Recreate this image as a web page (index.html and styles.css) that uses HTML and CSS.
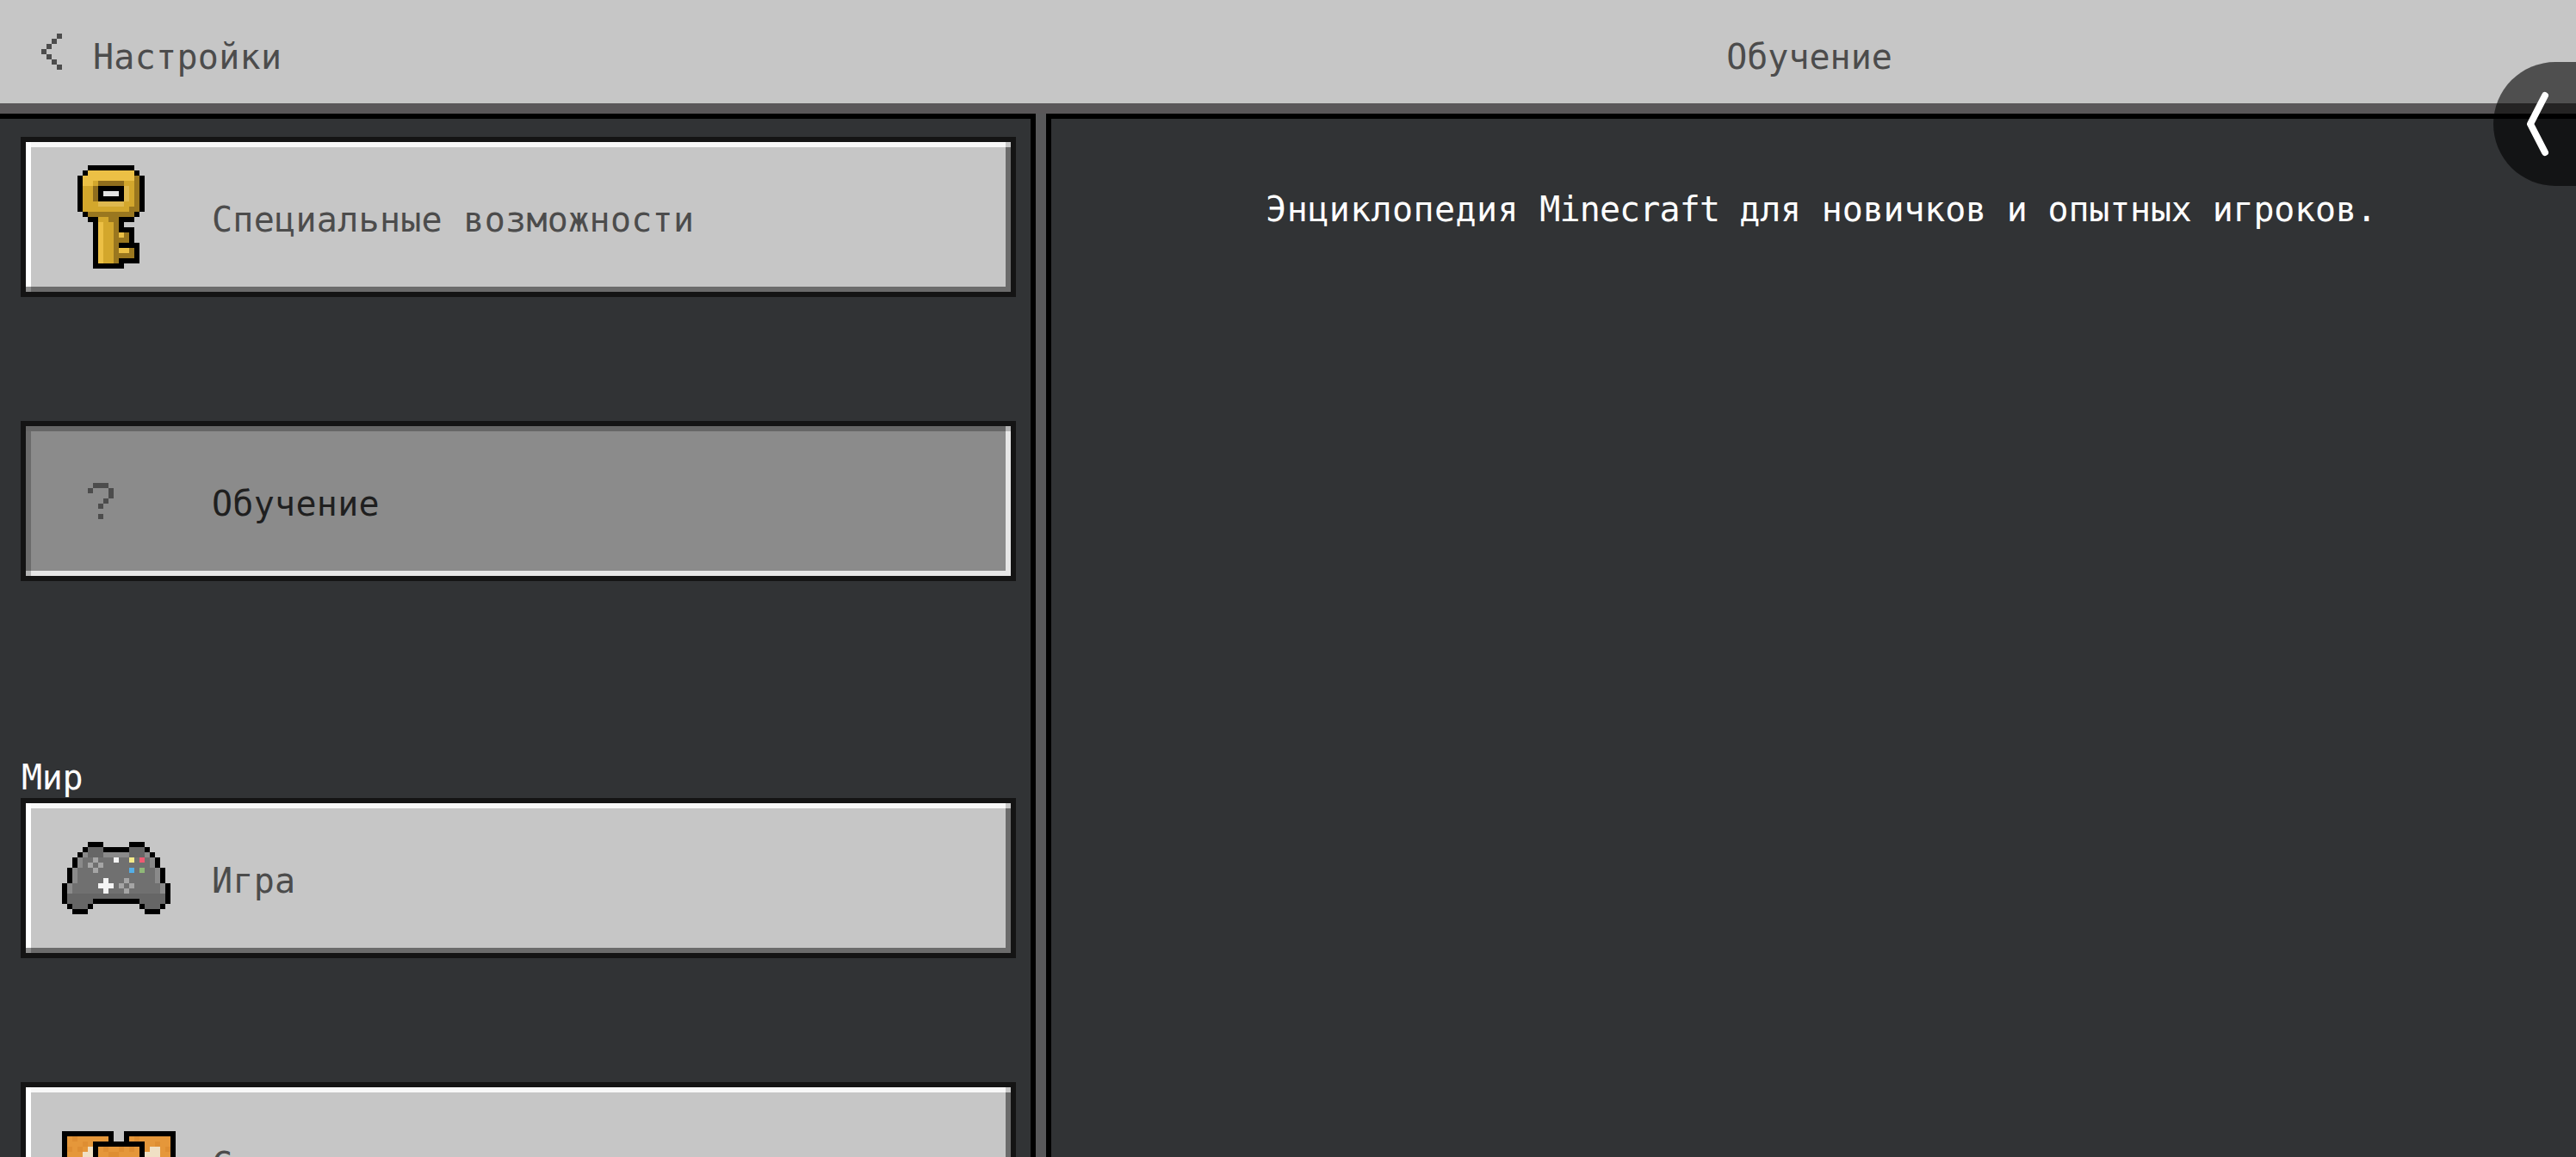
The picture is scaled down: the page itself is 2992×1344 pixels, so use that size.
FILE: index.html
```html
<!DOCTYPE html>
<html lang="ru">
<head>
<meta charset="utf-8">
<title>Обучение</title>
<link rel="stylesheet" href="styles.css">
</head>
<body>
<header class="topbar">
  <div class="back">
    <svg class="back-icon" viewBox="0 0 4 7" shape-rendering="crispEdges"><path fill="#4c4c4c" d="M3 0h1v1H3zM2 1h1v1H2zM1 2h1v1H1zM0 3h1v1H0zM1 4h1v1H1zM2 5h1v1H2zM3 6h1v1H3z"/></svg>
    <span class="back-label">Настройки</span>
  </div>
  <div class="title">Обучение</div>
</header>
<main class="panes">
  <nav class="sidebar">
    <a class="item">
      <span class="icon-slot">
        <svg class="icon key" viewBox="0 0 13 20" shape-rendering="crispEdges">
          <path fill="#000" d="M2 0h9v1H2zM1 1h1v1H1zM11 1h1v1h-1zM0 2h1v7H0zM12 2h1v7h-1zM1 9h1v1H1zM11 9h1v1h-1zM2 10h2v1H2zM8 10h3v1H8zM3 11h1v8H3zM8 11h1v1H8zM8 12h3v1H8zM10 13h1v2h-1zM8 15h4v1H8zM11 16h1v2h-1zM8 18h4v1H8zM3 19h6v1H3z"/>
          <path fill="#d3a72c" d="M2 2h9v7H2zM1 3h1v6H1zM4 10h3v9H4zM8 13h1v1H8z"/>
          <path fill="#ecc045" d="M2 1h9v1H2zM1 2h10v1H1zM1 3h2v1H1zM4 11h1v8H4zM8 13h1v1H8zM8 16h2v1H8z"/>
          <path fill="#9a771f" d="M11 2h1v7h-1zM2 9h9v1H2zM10 8h1v1h-1zM6 10h2v1H6zM7 11h1v8H7zM9 13h1v1H9zM8 14h2v1H8zM10 16h1v1h-1zM8 17h3v1H8z"/>
          <path fill="#8f6d1d" d="M4 3h5v1H4zM3 4h1v3H3z"/>
          <path fill="#dfb94f" d="M4 7h5v1H4zM9 4h1v3H9z"/>
          <path fill="#000" d="M4 4h5v3H4z"/>
          <path fill="#e2e2e2" d="M5 5h3v1H5z"/>
        </svg>
      </span>
      <span class="item-label">Специальные возможности</span>
    </a>
    <a class="item active">
      <span class="icon-slot">
        <svg class="icon help" viewBox="0 0 5 7" shape-rendering="crispEdges"><path fill="#4c4c4c" d="M1 0h3v1H1zM0 1h1v1H0zM4 1h1v2H4zM3 3h1v1H3zM2 4h1v1H2zM2 6h1v1H2z"/></svg>
      </span>
      <span class="item-label">Обучение</span>
    </a>
    <div class="section-label">Мир</div>
    <a class="item">
      <span class="icon-slot">
        <svg class="icon pad" viewBox="0 0 21 14" shape-rendering="crispEdges">
          <path fill="#000" d="M5 0h3v1H5zM13 0h3v1h-3zM4 1h1v1H4zM8 1h5v1H8zM16 1h1v1h-1zM3 2h1v1H3zM17 2h1v1h-1zM2 3h1v2H2zM18 3h1v2h-1zM1 5h1v3H1zM19 5h1v3h-1zM0 8h1v4H0zM20 8h1v4h-1zM1 12h1v1H1zM5 12h1v1H5zM15 12h1v1h-1zM19 12h1v1h-1zM6 11h9v1H6zM2 13h3v1H2zM16 13h3v1h-3z"/>
          <path fill="#707070" d="M4 3h14v2H4zM3 5h15v3H3zM2 8h17v2H2z"/>
          <path fill="#8a8a8a" d="M4 2h1v1H4zM8 2h5v1H8zM16 2h1v1h-1zM3 3h1v2H3zM17 3h1v2h-1zM2 5h1v3H2zM18 5h1v3h-1zM1 8h1v2H1zM19 8h1v2h-1z"/>
          <path fill="#666" d="M5 1h3v2H5zM13 1h3v2h-3zM6 10h9v1H6zM1 10h1v2H1zM19 10h1v2h-1zM2 10h4v2H2zM15 10h4v2h-4zM2 12h3v1H2zM16 12h3v1h-3z"/>
          <path fill="#a5a5a5" d="M6 3h1v1H6zM5 4h1v1H5zM7 4h1v1H7zM6 5h1v1H6zM12 7h1v1h-1zM11 8h1v1h-1zM13 8h1v1h-1zM12 9h1v1h-1z"/>
          <path fill="#f4f4f4" d="M8 7h1v3H8zM7 8h3v1H7zM10 3h1v1h-1z"/>
          <path fill="#f3ea8a" d="M13 3h1v1h-1z"/>
          <path fill="#ef5a72" d="M15 3h1v1h-1z"/>
          <path fill="#54aee6" d="M13 5h1v1h-1z"/>
          <path fill="#8fb878" d="M15 5h1v1h-1z"/>
        </svg>
      </span>
      <span class="item-label">Игра</span>
    </a>
    <a class="item">
      <span class="icon-slot">
        <svg class="icon tiles" viewBox="0 0 22 6" shape-rendering="crispEdges">
          <path fill="#e5973a" d="M1 1h8v5H1zM13 1h8v5h-8zM7 3h8v3H7z"/>
          <path fill="#de8e32" d="M2 1h1v1H2zM4 2h1v1H4zM1 3h1v1H1zM3 3h1v1H3zM14 1h1v1h-1zM18 2h1v1h-1zM20 3h1v1h-1zM8 3h1v1H8zM11 3h1v1h-1zM13 3h1v1h-1zM9 4h2v2H9z"/>
          <path fill="#f0e0c4" d="M5 3h1v3H5zM4 4h1v2H4zM17 3h2v3h-2zM16 4h1v2h-1z"/>
          <path fill="#000" d="M0 0h10v1H0zM12 0h10v1H12zM0 1h1v5H0zM21 1h1v5h-1zM9 1h1v1H9zM12 1h1v1h-1zM6 2h10v1H6zM6 3h1v3H6zM15 3h1v3h-1z"/>
        </svg>
      </span>
      <span class="item-label">Создатель</span>
    </a>
  </nav>
  <div class="divider"></div>
  <section class="content">
    <p class="description"><span class="lead">Энциклопедия </span><span class="latin">Minecraft </span>для новичков и опытных игроков.</p>
  </section>
</main>
<button class="collapse" aria-label="Свернуть">
  <svg class="collapse-icon" viewBox="0 0 30 78"><path d="M21 6 L4 39 L21 72" fill="none" stroke="#fff" stroke-width="8" stroke-linecap="round" stroke-linejoin="round"/></svg>
</button>
</body>
</html>
```
FILE: styles.css
```css
* { box-sizing: border-box; }
html, body { margin: 0; height: 100%; overflow: hidden; }
body {
  position: relative;
  display: flex;
  flex-direction: column;
  background: #313335;
  font-family: "DejaVu Sans Mono", "Liberation Mono", monospace;
  font-size: 40px;
  letter-spacing: 0.28px;
  line-height: 48px;
}
.topbar {
  flex: none;
  height: 132px;
  display: flex;
  align-items: center;
  background: #c6c6c6;
  border-bottom: 12px solid #5a5759;
  color: #4c4c4c;
}
.back {
  width: 1221px;
  flex: none;
  display: flex;
  align-items: center;
  padding-left: 48px;
  gap: 36px;
}
.back-icon { display: block; width: 24px; height: 42px; }
.back-label { margin-top: 12px; }
.title { flex: 1; text-align: center; padding-right: 10px; margin-top: 12px; letter-spacing: 0; }
.panes { flex: 1; min-height: 0; display: flex; }
.sidebar {
  flex: none;
  width: 1203px;
  padding: 21px 17px 0 24px;
  border-top: 6px solid #000;
  border-right: 6px solid #000;
  overflow: hidden;
}
.divider { flex: none; width: 12px; background: #58585a; }
.content {
  flex: 1;
  padding: 81px 0 0 18px;
  border-top: 6px solid #000;
  border-left: 6px solid #000;
  color: #fff;
}
.description { margin: 0; text-align: center; letter-spacing: -0.2px; }
.lead { letter-spacing: 0.38px; }
.latin { letter-spacing: -0.88px; }
.item {
  position: relative;
  display: flex;
  align-items: center;
  height: 186px;
  margin-bottom: 144px;
  border: 6px solid #141414;
  background: #c6c6c6;
  box-shadow: inset 6px 0 0 #fff, inset 0 6px 0 #f8f8f8, inset -6px 0 0 #6b6b6b, inset 0 -6px 0 #6b6b6b;
  color: #4c4c4c;
}
.item::before, .item::after {
  content: "";
  position: absolute;
  width: 6px;
  height: 6px;
}
.item::before { top: 0; right: 0; background: #c8c8c8; }
.item::after { bottom: 0; left: 0; background: #8c8c8c; }
.item.active {
  background: #8b8b8b;
  box-shadow: inset 0 6px 0 #666, inset 6px 0 0 #6b6b6b, inset 0 -6px 0 #e6e6e6, inset -6px 0 0 #e6e6e6;
  color: #1f1f1f;
}
.item.active::before { background: #b4b4b4; }
.item.active::after { background: #b4b4b4; }
.icon-slot { flex: none; width: 216px; height: 100%; position: relative; }
.icon { position: absolute; display: block; }
.key { left: 60px; top: 27px; width: 78px; height: 120px; }
.help { left: 72px; top: 66px; width: 30px; height: 42px; }
.pad { left: 42px; top: 45px; width: 126px; height: 84px; }
.tiles { left: 42px; top: 51px; width: 132px; height: 36px; }
.item-label { margin-top: 6px; }
.section-label { color: #fff; height: 48px; margin: 204px 0 0 1px; letter-spacing: -0.3px; }
.collapse {
  position: absolute;
  top: 72px;
  right: 0;
  width: 96px;
  height: 144px;
  padding: 0;
  border: 0;
  border-radius: 72px 0 0 72px;
  background: rgba(0, 0, 0, 0.6);
}
.collapse-icon { position: absolute; left: 39px; top: 33px; width: 30px; height: 78px; }
```
